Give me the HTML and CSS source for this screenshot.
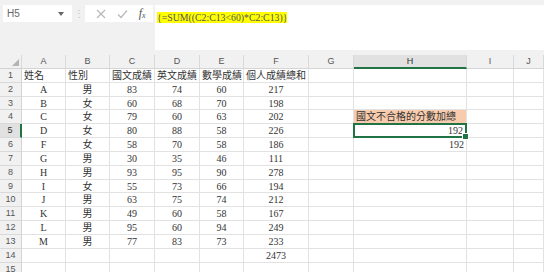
FILE: index.html
```html
<!DOCTYPE html>
<html lang="zh-Hant">
<head>
    <meta charset="UTF-8">
    <title>國文不合格的分數加總</title>
    <link rel="stylesheet" href="styles.css">
</head>
<body>
    <!-- 公式列 -->
    <div class="toolbar">
        <div class="name-box">
            <span>H5</span>
            <svg class="caret" width="6" height="4" viewBox="0 0 6 4"><path d="M0 0H6L3 4Z" fill="#666"/></svg>
        </div>
        <div class="dots">⋮</div>
        <div class="btn-box">
            <svg width="10" height="10" viewBox="0 0 10 10"><path d="M1 1L9 9M9 1L1 9" stroke="#b8b8b8" stroke-width="1.2"/></svg>
            <svg width="11" height="10" viewBox="0 0 11 10"><path d="M1 5.5L4 8.5L10 1.5" stroke="#b8b8b8" stroke-width="1.2" fill="none"/></svg>
            <span class="fx">f<span class="fx-x">x</span></span>
        </div>
        <div class="formula">
            <span class="hl">{=SUM((C2:C13&lt;60)*C2:C13)}</span>
        </div>
    </div>

    <!-- 工作表 -->
    <div class="sheet">
        <div class="hd corner"><span class="tri"></span></div>
        <div class="hd">A</div><div class="hd">B</div><div class="hd">C</div><div class="hd">D</div><div class="hd">E</div>
        <div class="hd">F</div><div class="hd">G</div><div class="hd sel-col">H</div><div class="hd">I</div><div class="hd">J</div>

        <div class="rh">1</div>
        <div class="c l">姓名</div><div class="c l">性別</div><div class="c l">國文成績</div><div class="c l">英文成績</div><div class="c l">數學成績</div><div class="c l">個人成績總和</div><div class="c"></div><div class="c"></div><div class="c"></div><div class="c"></div>

        <div class="rh">2</div>
        <div class="c">A</div><div class="c">男</div><div class="c">83</div><div class="c">74</div><div class="c">60</div><div class="c">217</div><div class="c"></div><div class="c"></div><div class="c"></div><div class="c"></div>

        <div class="rh">3</div>
        <div class="c">B</div><div class="c">女</div><div class="c">60</div><div class="c">68</div><div class="c">70</div><div class="c">198</div><div class="c"></div><div class="c"></div><div class="c"></div><div class="c"></div>

        <div class="rh">4</div>
        <div class="c">C</div><div class="c">女</div><div class="c">79</div><div class="c">60</div><div class="c">63</div><div class="c">202</div><div class="c"></div><div class="c l label">國文不合格的分數加總</div><div class="c"></div><div class="c"></div>

        <div class="rh sel-row">5</div>
        <div class="c">D</div><div class="c">女</div><div class="c">80</div><div class="c">88</div><div class="c">58</div><div class="c">226</div><div class="c"></div><div class="c r active">192<span class="handle"></span></div><div class="c"></div><div class="c"></div>

        <div class="rh">6</div>
        <div class="c">F</div><div class="c">女</div><div class="c">58</div><div class="c">70</div><div class="c">58</div><div class="c">186</div><div class="c"></div><div class="c r">192</div><div class="c"></div><div class="c"></div>

        <div class="rh">7</div>
        <div class="c">G</div><div class="c">男</div><div class="c">30</div><div class="c">35</div><div class="c">46</div><div class="c">111</div><div class="c"></div><div class="c"></div><div class="c"></div><div class="c"></div>

        <div class="rh">8</div>
        <div class="c">H</div><div class="c">男</div><div class="c">93</div><div class="c">95</div><div class="c">90</div><div class="c">278</div><div class="c"></div><div class="c"></div><div class="c"></div><div class="c"></div>

        <div class="rh">9</div>
        <div class="c">I</div><div class="c">女</div><div class="c">55</div><div class="c">73</div><div class="c">66</div><div class="c">194</div><div class="c"></div><div class="c"></div><div class="c"></div><div class="c"></div>

        <div class="rh">10</div>
        <div class="c">J</div><div class="c">男</div><div class="c">63</div><div class="c">75</div><div class="c">74</div><div class="c">212</div><div class="c"></div><div class="c"></div><div class="c"></div><div class="c"></div>

        <div class="rh">11</div>
        <div class="c">K</div><div class="c">男</div><div class="c">49</div><div class="c">60</div><div class="c">58</div><div class="c">167</div><div class="c"></div><div class="c"></div><div class="c"></div><div class="c"></div>

        <div class="rh">12</div>
        <div class="c">L</div><div class="c">男</div><div class="c">95</div><div class="c">60</div><div class="c">94</div><div class="c">249</div><div class="c"></div><div class="c"></div><div class="c"></div><div class="c"></div>

        <div class="rh">13</div>
        <div class="c">M</div><div class="c">男</div><div class="c">77</div><div class="c">83</div><div class="c">73</div><div class="c">233</div><div class="c"></div><div class="c"></div><div class="c"></div><div class="c"></div>

        <div class="rh">14</div>
        <div class="c"></div><div class="c"></div><div class="c"></div><div class="c"></div><div class="c"></div><div class="c">2473</div><div class="c"></div><div class="c"></div><div class="c"></div><div class="c"></div>

        <div class="rh">15</div>
        <div class="c"></div><div class="c"></div><div class="c"></div><div class="c"></div><div class="c"></div><div class="c"></div><div class="c"></div><div class="c"></div><div class="c"></div><div class="c"></div>
    </div>
</body>
</html>
```

FILE: styles.css
```css
body {
    margin: 0;
    width: 544px;
    height: 272px;
    overflow: hidden;
    background-color: #fff;
    font-family: 'Liberation Serif', 'Noto Sans CJK TC', serif;
    color: #333;
}
.toolbar {
    display: flex;
    align-items: flex-start;
    height: 55px;
    padding: 5px 0 0 3px;
    box-sizing: border-box;
    background-color: #f1f1f1;
}
.name-box {
    width: 69px;
    height: 17px;
    box-sizing: border-box;
    background-color: #fff;
    display: flex;
    align-items: center;
    justify-content: space-between;
    padding: 0 8px 0 4px;
    font-family: 'Liberation Sans', sans-serif;
    font-size: 10px;
    color: #666;
}
.dots {
    width: 13px;
    text-align: center;
    color: #c0c0c0;
    font-size: 10px;
    line-height: 17px;
}
.btn-box {
    width: 68px;
    height: 17px;
    background-color: #fff;
    display: flex;
    align-items: center;
    justify-content: space-around;
    padding: 0 2px 0 6px;
    box-sizing: border-box;
}
.fx {
    font-family: 'Liberation Serif', serif;
    font-style: italic;
    font-size: 12px;
    color: #555;
}
.fx-x {
    font-size: 8px;
    vertical-align: -1px;
}
.formula {
    flex: 1;
    margin-left: 2px;
    height: 45px;
    background-color: #fff;
    padding: 6px 0 0 2px;
    box-sizing: border-box;
    font-size: 9.8px;
    line-height: 13px;
}
.hl {
    background-color: #ffff00;
    color: #555;
}
.sheet {
    display: grid;
    grid-template-columns: 22px 44px 44px 45px 45px 44px 65px 45px 113px 47px 30px;
    grid-template-rows: 14px repeat(15, 13.83px);
    font-size: 10px;
}
.hd {
    background-color: #f1f1f1;
    border-right: 1px solid #d9d9d9;
    border-bottom: 1px solid #d4d4d4;
    text-align: center;
    line-height: 13px;
    font-family: 'Liberation Sans', sans-serif;
    font-size: 9px;
    color: #555;
    box-sizing: border-box;
}
.corner {
    position: relative;
}
.tri {
    position: absolute;
    right: 2px;
    bottom: 2px;
    border-left: 7px solid transparent;
    border-bottom: 7px solid #b4b4b4;
}
.sel-col {
    background-color: #e1e1e1;
    border-bottom: 2px solid #217346;
    color: #333;
}
.rh {
    background-color: #f1f1f1;
    border-right: 1px solid #d4d4d4;
    border-bottom: 1px solid #d9d9d9;
    text-align: center;
    font-family: 'Liberation Sans', sans-serif;
    font-size: 9px;
    line-height: 13px;
    color: #555;
    box-sizing: border-box;
}
.sel-row {
    background-color: #e1e1e1;
    border-right: 2px solid #217346;
    color: #333;
}
.c {
    border-right: 1px solid #e2e2e2;
    border-bottom: 1px solid #e2e2e2;
    box-sizing: border-box;
    text-align: center;
    line-height: 13px;
    white-space: nowrap;
    overflow: visible;
    padding: 0 2px;
}
.l {
    text-align: left;
}
.r {
    text-align: right;
}
.label {
    background-color: #f8cbad;
}
.active {
    position: relative;
    border: 2px solid #217346;
    margin: -1px 0 0 -1px;
    line-height: 11px;
}
.handle {
    position: absolute;
    right: -4px;
    bottom: -4px;
    width: 5px;
    height: 5px;
    background-color: #217346;
    border: 1px solid #fff;
}
```
